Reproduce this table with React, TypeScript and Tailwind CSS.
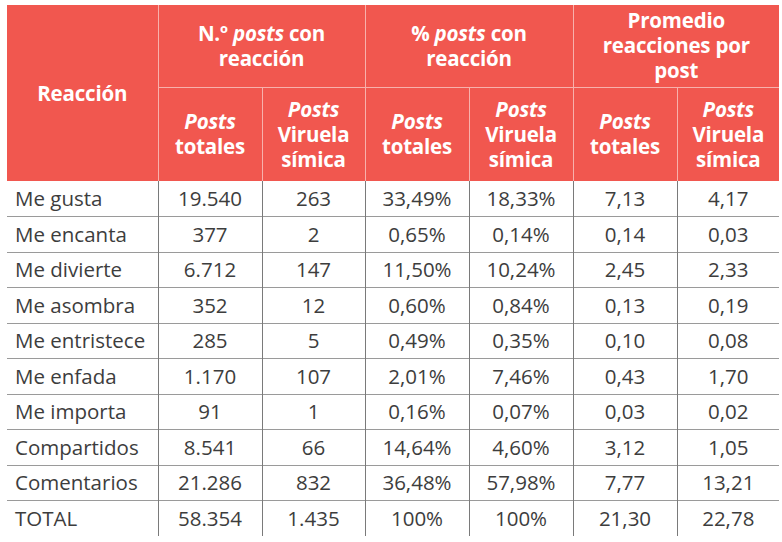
const rows = [
  ["Me gusta", "19.540", "263", "33,49%", "18,33%", "7,13", "4,17"],
  ["Me encanta", "377", "2", "0,65%", "0,14%", "0,14", "0,03"],
  ["Me divierte", "6.712", "147", "11,50%", "10,24%", "2,45", "2,33"],
  ["Me asombra", "352", "12", "0,60%", "0,84%", "0,13", "0,19"],
  ["Me entristece", "285", "5", "0,49%", "0,35%", "0,10", "0,08"],
  ["Me enfada", "1.170", "107", "2,01%", "7,46%", "0,43", "1,70"],
  ["Me importa", "91", "1", "0,16%", "0,07%", "0,03", "0,02"],
  ["Compartidos", "8.541", "66", "14,64%", "4,60%", "3,12", "1,05"],
  ["Comentarios", "21.286", "832", "36,48%", "57,98%", "7,77", "13,21"],
  ["TOTAL", "58.354", "1.435", "100%", "100%", "21,30", "22,78"],
];

const widths = ["w-[151px]", "w-[104px]", "w-[103px]", "w-[104px]", "w-[104px]", "w-[104px]", "w-[102px]"];

const SubHead = ({ kind }: { kind: "tot" | "vir" }) =>
  kind === "tot" ? (
    <>
      <i>Posts</i>
      <br />
      totales
    </>
  ) : (
    <>
      <i>Posts</i>
      <br />
      Viruela
      <br />
      símica
    </>
  );

export default function App() {
  return (
    <div
      className="bg-white w-[782px] h-[542px] pt-[5px] pl-[7px]"
      style={{ fontFamily: '"Open Sans", "Noto Sans", sans-serif' }}
    >
      <table className="border-collapse table-fixed w-[772px] text-[#3d3d3d]">
        <colgroup>
          {widths.map((w, i) => (
            <col key={i} className={w} />
          ))}
        </colgroup>
        <thead className="bg-[#f1574f] text-white font-bold text-[20.5px] leading-[25px] tracking-[-0.2px]">
          <tr className="h-[82px]">
            <th rowSpan={2} className="border-r border-[#f7b1ac] text-center">
              Reacción
            </th>
            <th colSpan={2} className="border-r border-b border-[#f7b1ac] text-center px-2">
              N.º <i>posts</i> con
              <br />
              reacción
            </th>
            <th colSpan={2} className="border-r border-b border-[#f7b1ac] text-center px-2">
              % <i>posts</i> con
              <br />
              reacción
            </th>
            <th colSpan={2} className="border-b border-[#f7b1ac] text-center px-2">
              Promedio
              <br />
              reacciones por
              <br />
              post
            </th>
          </tr>
          <tr className="h-[94px]">
            {["tot", "vir", "tot", "vir", "tot", "vir"].map((k, i) => (
              <th key={i} className={`text-center ${i < 5 ? "border-r border-[#f7b1ac]" : ""}`}>
                <SubHead kind={k as "tot" | "vir"} />
              </th>
            ))}
          </tr>
        </thead>
        <tbody className="text-[20.5px]">
          {rows.map((r, ri) => (
            <tr key={ri} className={`h-[35.5px] ${ri < rows.length - 1 ? "border-b border-[#9a9a9a]" : ""}`}>
              {r.map((c, ci) => (
                <td
                  key={ci}
                  className={`${ci === 0 ? "text-left pl-2" : "text-center"} ${ci < 6 ? "border-r border-[#7a7a7a]" : ""}`}
                >
                  {c}
                </td>
              ))}
            </tr>
          ))}
        </tbody>
      </table>
    </div>
  );
}
